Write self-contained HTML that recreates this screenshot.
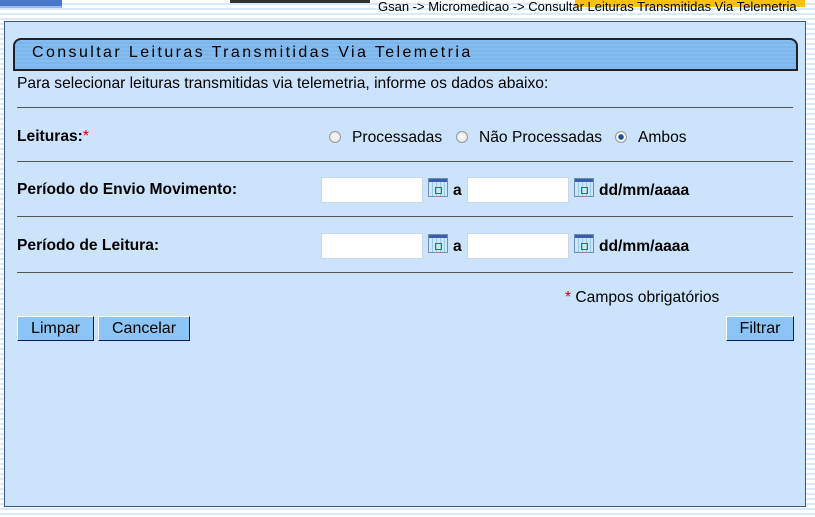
<!DOCTYPE html>
<html><head><meta charset="utf-8"><style>
*{margin:0;padding:0;box-sizing:border-box}
body{width:815px;height:517px;position:relative;overflow:hidden;font-family:"Liberation Sans",Arial,sans-serif;font-size:15.6px;color:#000;
background:repeating-linear-gradient(#fff 0,#fff 3px,#dbeaf8 3px,#dbeaf8 5px);}
.a{position:absolute}
.panel{left:4px;top:21px;width:802px;height:486px;background:#cbe3fb;border:1px solid #3b5a7a}
.title{left:13px;top:38px;width:785px;height:33px;border:2px solid #222;border-radius:8px 8px 0 0;
background:repeating-linear-gradient(#86bdf0 0,#86bdf0 2px,#7db6ea 2px,#7db6ea 4px);font-size:16px;letter-spacing:2.4px;padding:4px 0 0 17px}
.hr{left:17px;width:776px;height:1px;background:#555}
.b{font-weight:bold}
.inp{width:102px;height:26px;background:#fff;border:1px solid #c8d8e8}
.cal{width:20px;height:19px;border:1px solid #6a8fb0;background:repeating-linear-gradient(90deg,#cfe6f8 0,#cfe6f8 3px,#9cc8ea 3px,#9cc8ea 4px)}
.cal:before{content:"";position:absolute;left:0;top:0;right:0;height:3px;background:#3a5fa8}
.cal:after{content:"";position:absolute;left:6px;top:8px;width:5px;height:5px;border:1px solid #b04040}
.rad{width:12px;height:12px;border-radius:50%;border:1px solid #999;background:radial-gradient(#fff,#ddd)}
.btn{top:316px;height:25px;background:#8cc4f5;border:1px solid #000;border-color:#fff #0a1a5a #0a1a5a #fff;font-size:16px;text-align:center;line-height:23px}
</style></head><body>
<div class="a" style="left:0;top:0;width:62px;height:6px;background:#4a78c8"></div>
<div class="a" style="left:0;top:6px;width:62px;height:2px;background:#9bbbe4"></div>
<div class="a" style="left:230px;top:0;width:140px;height:3px;background:#333"></div>
<div class="a" style="left:575px;top:0;width:230px;height:7px;background:#f7c300"></div>
<div class="a" style="left:378px;top:-1px;font-size:13px;color:#000">Gsan -&gt; Micromedicao -&gt; Consultar Leituras Transmitidas Via Telemetria</div>
<div class="a panel"></div>
<div class="a title">Consultar Leituras Transmitidas Via Telemetria</div>
<div class="a" style="left:17px;top:75px">Para selecionar leituras transmitidas via telemetria, informe os dados abaixo:</div>
<div class="a hr" style="top:107px"></div>
<div class="a b" style="left:17px;top:128px">Leituras:<span style="color:#c00;font-weight:normal">*</span></div>
<div class="a rad" style="left:329px;top:131px"></div>
<div class="a" style="left:352px;top:129px">Processadas</div>
<div class="a rad" style="left:456px;top:131px"></div>
<div class="a" style="left:479px;top:129px">Não Processadas</div>
<div class="a rad" style="left:615px;top:131px;background:radial-gradient(#1e4e8a 0,#1e4e8a 2.5px,#fff 3px,#ddd)"></div>
<div class="a" style="left:638px;top:129px">Ambos</div>
<div class="a hr" style="top:161px"></div>
<div class="a b" style="left:17px;top:181px">Período do Envio Movimento:</div>
<div class="a inp" style="left:321px;top:177px"></div>
<div class="a cal" style="left:428px;top:178px"></div>
<div class="a b" style="left:453px;top:182px">a</div>
<div class="a inp" style="left:467px;top:177px"></div>
<div class="a cal" style="left:574px;top:178px"></div>
<div class="a b" style="left:599px;top:182px">dd/mm/aaaa</div>
<div class="a hr" style="top:216px"></div>
<div class="a b" style="left:17px;top:237px">Período de Leitura:</div>
<div class="a inp" style="left:321px;top:233px"></div>
<div class="a cal" style="left:428px;top:234px"></div>
<div class="a b" style="left:453px;top:238px">a</div>
<div class="a inp" style="left:467px;top:233px"></div>
<div class="a cal" style="left:574px;top:234px"></div>
<div class="a b" style="left:599px;top:238px">dd/mm/aaaa</div>
<div class="a hr" style="top:272px"></div>
<div class="a" style="left:565px;top:289px"><span style="color:#c00">*</span> Campos obrigatórios</div>
<div class="a btn" style="left:17px;width:77px">Limpar</div>
<div class="a btn" style="left:98px;width:92px">Cancelar</div>
<div class="a btn" style="left:726px;width:68px">Filtrar</div>
</body></html>
